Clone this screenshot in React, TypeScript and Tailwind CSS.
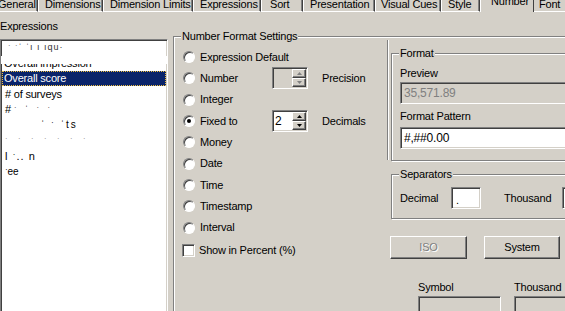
import React from "react";

const TABS = [
  { label: "General", cls: "w-[40px] pl-0 -ml-[2px]" },
  { label: "Dimensions", cls: "w-[65px] pl-[6px] border-l border-l-white" },
  { label: "Dimension Limits", cls: "w-[90px] pl-[6px] border-l border-l-white" },
  { label: "Expressions", cls: "w-[68px] pl-[6px] border-l border-l-white" },
  { label: "Sort", cls: "w-[42px] pl-[8px] border-l border-l-white" },
  { label: "Presentation", cls: "w-[72px] pl-[6px] border-l border-l-white" },
  { label: "Visual Cues", cls: "w-[66px] pl-[5px] border-l border-l-white" },
  { label: "Style", cls: "w-[39px] pl-[6px] border-l border-l-white" },
];

const FORMATS = [
  "Expression Default",
  "Number",
  "Integer",
  "Fixed to",
  "Money",
  "Date",
  "Time",
  "Timestamp",
  "Interval",
];

const sunken =
  "border border-t-[#808080] border-l-[#808080] border-b-white border-r-white shadow-[inset_1px_1px_0_#404040,inset_-1px_-1px_0_#d4d0c8]";
const raised =
  "border border-t-white border-l-white border-b-[#404040] border-r-[#404040] shadow-[inset_-1px_-1px_0_#808080]";
const etched = "border border-[#808080] shadow-[inset_1px_1px_0_#fff,1px_1px_0_#fff]";

function Radio({ checked }: { checked?: boolean }) {
  return (
    <span className="w-[12px] h-[12px] shrink-0 rounded-full bg-white border border-t-[#808080] border-l-[#808080] border-b-white border-r-white shadow-[inset_1px_1px_0_#404040] flex items-center justify-center">
      {checked && <span className="w-[4px] h-[4px] rounded-full bg-black" />}
    </span>
  );
}

function Arrow({ up, color }: { up?: boolean; color: string }) {
  return (
    <svg width="5" height="3" viewBox="0 0 5 3">
      <path d={up ? "M2.5 0 L5 3 L0 3 Z" : "M0 0 L5 0 L2.5 3 Z"} fill={color} />
    </svg>
  );
}

function Spinner({ value, disabled }: { value?: string; disabled?: boolean }) {
  const color = disabled ? "#808080" : "#000";
  return (
    <div className={`w-[36px] h-[22px] flex ${sunken} ${disabled ? "bg-[#d4d0c8]" : "bg-white"}`}>
      <div className="flex-1 pl-[2px] leading-[20px] text-[12px]">{value}</div>
      <div className="w-[15px] flex flex-col py-[1px] pr-[1px]">
        <div className={`flex-1 bg-[#d4d0c8] flex items-center justify-center ${raised}`}>
          <Arrow up color={color} />
        </div>
        <div className={`flex-1 bg-[#d4d0c8] flex items-center justify-center ${raised}`}>
          <Arrow color={color} />
        </div>
      </div>
    </div>
  );
}

export default function App() {
  return (
    <div className="w-[565px] h-[311px] overflow-hidden bg-[#d4d0c8] text-black text-[11px] tracking-[-0.2px] font-['Liberation_Sans',Arial,sans-serif]">
      {/* Tabs */}
      <div className="flex h-[12px] overflow-hidden whitespace-nowrap">
        {TABS.map((t) => (
          <div
            key={t.label}
            className={`h-[12px] shrink-0 overflow-hidden border-b border-b-white border-r border-r-[#404040] shadow-[inset_-1px_0_0_#808080] ${t.cls}`}
          >
            <div className="leading-[13px] -mt-[2px]">{t.label}</div>
          </div>
        ))}
        <div className="w-[54px] h-[12px] shrink-0 overflow-hidden border-l border-l-white border-r border-r-[#404040] pl-[10px]">
          <div className="leading-[13px] -mt-[5px]">Number</div>
        </div>
        <div className="w-[44px] h-[12px] shrink-0 overflow-hidden border-b border-b-white border-r border-r-[#404040] pl-[5px]">
          <div className="leading-[13px] -mt-[2px]">Font</div>
        </div>
      </div>

      <div className="flex">
        {/* Expressions list */}
        <div className="w-[168px] shrink-0 pt-[8px]">
          <div className="h-[13px] leading-[13px]">Expressions</div>
          <div className={`mt-[6px] h-[280px] bg-white overflow-hidden ${sunken} pt-0`}>
            <div className="h-[15.5px] flex items-center pl-[7px] text-[9px] text-[#333] tracking-[1px]">
              ˑ ˑˈ ˈı ı ıqu·
            </div>
            <div className="h-[15.5px] relative flex items-center pl-[3px] whitespace-nowrap">
              Overall impression
              <div className="absolute left-0 right-0 top-0 h-[8px] bg-white" />
            </div>
            <div className="h-[15px] mx-[1px] flex items-center pl-[2px] bg-[#0a246a] text-white outline outline-1 outline-dotted outline-[#f0c040] -outline-offset-1">
              Overall score
            </div>
            <div className="h-[15.5px] flex items-center pl-[4px]">
              # of surveys
            </div>
            <div className="h-[15.5px] flex items-center pl-[4px] whitespace-nowrap">
              #<span className="ml-[3px] text-[9px] tracking-[3px]">ˑ ˈ ˑ ˑ</span>
            </div>
            <div className="h-[15.5px] flex items-center pl-[40px] text-[10px] tracking-[2px]">
              ˈ ˑ ˈts
            </div>
            <div className="h-[15.5px] flex items-center pl-[4px] text-[9px] text-[#666] tracking-[4px]">
              ˑ ˑ ˑ ˑ ˑ ˑ ˑ
            </div>
            <div className="h-[15.5px] flex items-center pl-[4px] tracking-[1px]">
              l ˑ.. n
            </div>
            <div className="h-[15.5px] flex items-center pl-[4px] text-[10px]">
              ˑee
            </div>
          </div>
        </div>

        {/* Number Format Settings */}
        <div className={`relative ml-[5px] mt-[24px] w-[420px] h-[300px] shrink-0 ${etched}`}>
          <span className="absolute left-[7px] -top-[7px] px-[1px] leading-[13px] bg-[#d4d0c8]">
            Number Format Settings
          </span>
          <div className="flex">
            <div className="w-[213px] shrink-0 pt-[9.5px] pl-[9px]">
              {FORMATS.map((f) => (
                <div key={f} className="h-[21.3px] flex items-center whitespace-nowrap">
                  <div className="w-[89px] flex items-center gap-[5px]">
                    <Radio checked={f === "Fixed to"} />
                    <span>{f}</span>
                  </div>
                  {f === "Number" && (
                    <>
                      <Spinner disabled />
                      <span className="ml-[14px]">Precision</span>
                    </>
                  )}
                  {f === "Fixed to" && (
                    <>
                      <Spinner value="2" />
                      <span className="ml-[14px]">Decimals</span>
                    </>
                  )}
                </div>
              ))}
              <div className="mt-[2px] h-[21px] flex items-center gap-[4px] -ml-[1px]">
                <span className={`w-[13px] h-[13px] bg-white ${sunken}`} />
                <span>Show in Percent (%)</span>
              </div>
            </div>

            <div className="w-[2px] h-[120px] mt-[3px] border-l border-l-[#808080] border-r border-r-white" />

            <div className="ml-[2px] flex flex-col">
              {/* Format */}
              <div className={`relative mt-[16px] w-[200px] pl-[8px] pt-[12.5px] pb-[11px] ${etched}`}>
                <span className="absolute left-[7px] -top-[7px] px-[1px] leading-[13px] bg-[#d4d0c8]">
                  Format
                </span>
                <div className="h-[13px] leading-[13px]">Preview</div>
                <div className={`mt-[2.5px] h-[22px] pl-[3px] leading-[20px] text-[12px] text-[#808080] bg-[#d4d0c8] ${sunken}`}>
                  35,571.89
                </div>
                <div className="mt-[5.5px] h-[13px] leading-[13px]">Format Pattern</div>
                <div className={`mt-[4.5px] h-[22px] pl-[3px] leading-[20px] text-[12px] bg-white ${sunken}`}>
                  #,##0.00
                </div>
              </div>

              {/* Separators */}
              <div className={`relative mt-[13px] w-[200px] ${etched}`}>
                <span className="absolute left-[7px] -top-[7px] px-[1px] leading-[13px] bg-[#d4d0c8]">
                  Separators
                </span>
                <div className="h-[43px] pt-[3px] pl-[8px] flex items-center">
                  <span className="w-[51px] shrink-0">Decimal</span>
                  <div className={`w-[30px] h-[22px] shrink-0 bg-white pl-[4px] leading-[24px] ${sunken}`}>.</div>
                  <span className="ml-[23px] w-[58px] shrink-0">Thousand</span>
                  <div className={`w-[40px] h-[22px] shrink-0 bg-white ${sunken}`} />
                </div>
              </div>

              {/* Buttons */}
              <div className="mt-[17px] flex">
                <div className={`-ml-[1px] w-[77px] h-[23px] flex items-center justify-center text-[#808080] [text-shadow:1px_1px_0_#fff] ${raised}`}>
                  ISO
                </div>
                <div className={`ml-[17px] w-[76px] h-[23px] flex items-center justify-center ${raised}`}>
                  System
                </div>
              </div>

              {/* Symbol / Thousand */}
              <div className="mt-[21.5px] flex">
                <div className="ml-[27px] w-[96px] shrink-0">
                  <div className="h-[13px] leading-[13px]">Symbol</div>
                  <div className={`mt-[2.5px] w-[83px] h-[25px] bg-[#d4d0c8] ${sunken}`} />
                </div>
                <div className="w-[60px] shrink-0">
                  <div className="h-[13px] leading-[13px] whitespace-nowrap">Thousand</div>
                  <div className={`mt-[2.5px] w-[60px] h-[25px] bg-[#d4d0c8] ${sunken}`} />
                </div>
              </div>
            </div>
          </div>
        </div>
      </div>
    </div>
  );
}
